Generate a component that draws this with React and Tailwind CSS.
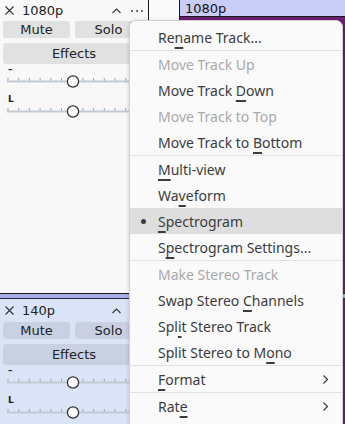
import React from "react";

const menu = [
  { label: "Rename Track...", m: 2 },
  { sep: true },
  { label: "Move Track Up", disabled: true },
  { label: "Move Track Down", m: 11 },
  { label: "Move Track to Top", disabled: true },
  { label: "Move Track to Bottom", m: 14 },
  { sep: true },
  { label: "Multi-view", m: 0 },
  { label: "Waveform", m: 2 },
  { label: "Spectrogram", m: 0, checked: true },
  { label: "Spectrogram Settings...", m: 1 },
  { sep: true },
  { label: "Make Stereo Track", disabled: true },
  { label: "Swap Stereo Channels", m: 12 },
  { label: "Split Stereo Track", m: 3 },
  { label: "Split Stereo to Mono", m: 17 },
  { sep: true },
  { label: "Format", m: 0, sub: true },
  { sep: true },
  { label: "Rate", m: 3, sub: true },
];

function Label({ text, m }) {
  if (m === undefined) return <span>{text}</span>;
  return (
    <span>
      {text.slice(0, m)}
      <span className="underline decoration-2 underline-offset-[4px] decoration-[#3c3c3c]">
        {text[m]}
      </span>
      {text.slice(m + 1)}
    </span>
  );
}

function MenuItem({ item }) {
  if (item.sep) return <div className="h-px bg-[#e2e2e2]" />;
  return (
    <div
      className={
        "relative flex h-[26px] items-center pl-[28px] pr-3 " +
        (item.checked ? "bg-[#dedede] " : "") +
        (item.disabled ? "text-[#a9a9a9]" : "text-[#3c3c3c]")
      }
    >
      {item.checked && (
        <span className="absolute left-[11px] top-[11px] h-[5px] w-[5px] rounded-full bg-[#3c3c3c]" />
      )}
      <Label text={item.label} m={item.m} />
      {item.sub && (
        <svg className="ml-auto mr-[1px]" width="7" height="11" viewBox="0 0 7 11">
          <path d="M1.5 1.5 L5.5 5.5 L1.5 9.5" fill="none" stroke="#3c3c3c" strokeWidth="1.2" />
        </svg>
      )}
    </div>
  );
}

function Slider({ label }) {
  const ticks = [];
  for (let x = 1; x < 140; x += 10.7) ticks.push(x);
  return (
    <div className="flex flex-col">
      <span className="h-[10px] pl-[8px] text-[9px] font-bold leading-[10px] text-[#222]">{label}</span>
      <svg width="140" height="14" className="ml-[7px]">
        {ticks.map((x, i) => (
          <line key={i} x1={x} y1="4" x2={x} y2="7" stroke="#9aa2ad" strokeWidth="1" />
        ))}
        <line x1="0" y1="7.5" x2="140" y2="7.5" stroke="#c3cad6" strokeWidth="2" />
        <circle cx="66" cy="7.5" r="5.6" fill="#ffffff" stroke="#333333" strokeWidth="1.3" />
      </svg>
    </div>
  );
}

function TrackControls({ name, selected, headerH, showDots }) {
  const btn = selected ? "bg-[#c8d0e2]" : "bg-[#e1e1e1]";
  return (
    <div className="flex flex-col text-[13px] text-[#222]">
      <div className="flex items-center px-[5px]" style={{ height: headerH }}>
        <svg width="9" height="9" viewBox="0 0 9 9">
          <path d="M0.5 0.5 L8.5 8.5 M8.5 0.5 L0.5 8.5" stroke="#333" strokeWidth="1.1" />
        </svg>
        <span className="ml-[8px] leading-none">{name}</span>
        <svg className="ml-auto mr-[22px]" width="9" height="6" viewBox="0 0 9 6">
          <path d="M0.5 5 L4.5 1 L8.5 5" fill="none" stroke="#333" strokeWidth="1.1" />
        </svg>
        {showDots && (
          <span className="absolute left-[131px] flex gap-[3px]">
            <span className="h-[2px] w-[2px] rounded-full bg-[#444]" />
            <span className="h-[2px] w-[2px] rounded-full bg-[#444]" />
            <span className="h-[2px] w-[2px] rounded-full bg-[#444]" />
          </span>
        )}
      </div>
      <div className="flex gap-[5px] px-[3px]">
        <div className={"flex h-[17px] w-[67px] items-center justify-center rounded-[3px] " + btn}>Mute</div>
        <div className={"flex h-[17px] w-[67px] items-center justify-center rounded-[3px] " + btn}>Solo</div>
      </div>
      <div className={"mx-[3px] mt-[5px] flex h-[21px] items-center justify-center rounded-[3px] " + btn}>
        Effects
      </div>
      <div className="flex flex-col gap-[6px]">
        <Slider label="–" />
        <Slider label="L" />
      </div>
    </div>
  );
}

function TrackSplit() {
  return (
    <div className="flex flex-col">
      <div className="h-px bg-[#1a1a1a]" />
      <div className="h-[4px] bg-[#a9afe6]" />
      <div className="h-px bg-[#2a2a3a]" />
    </div>
  );
}

export default function App() {
  return (
    <div className="relative h-[424px] w-[345px] overflow-hidden bg-[#fafafa] font-['DejaVu_Sans',sans-serif]">
      <div className="flex h-full">
        <div className="flex w-[149px] flex-col border-r border-[#1a1a1a]">
          <div className="relative h-[293px] bg-[#f8f8f8]">
            <TrackControls name="1080p" headerH={21} showDots />
          </div>
          <TrackSplit />
          <div className="relative flex-1 bg-[#dbe3f6]">
            <TrackControls name="140p" headerH={23} selected />
          </div>
        </div>
        <div className="flex w-[31px] flex-col border-r border-[#1a1a1a] bg-[#fafafa]">
          <div className="h-[293px]" />
          <TrackSplit />
          <div className="flex-1 bg-[#dbe3f6]" />
        </div>
        <div className="flex flex-1 flex-col">
          <div className="flex h-[293px] flex-col bg-[#6d1d72]">
            <div className="flex h-[17px] items-center border-b border-[#1a1a1a] bg-[#c9ccf4] pl-[5px] text-[13px] leading-none text-[#111]">
              1080p
            </div>
          </div>
          <TrackSplit />
          <div className="flex-1 bg-[#6d1d72]" />
        </div>
      </div>

      <div className="absolute left-[129px] top-[20px] h-[420px] w-[214px] rounded-t-[7px] border border-[#d2d2d2] bg-[#fafafa] pt-[3px] font-['Noto_Sans',sans-serif] text-[14px] shadow-[0_1px_4px_rgba(0,0,0,0.18)]">
        {menu.map((item, i) => (
          <MenuItem key={i} item={item} />
        ))}
      </div>
    </div>
  );
}
